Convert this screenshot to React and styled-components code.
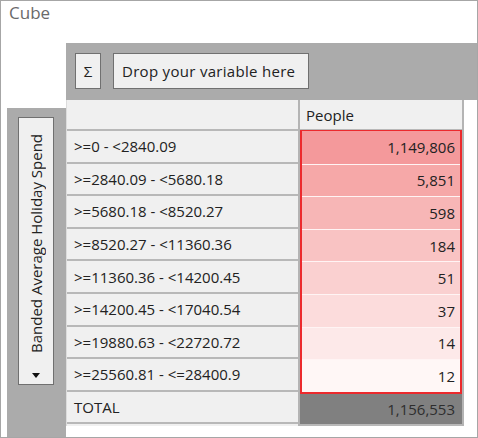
import styled, { createGlobalStyle } from "styled-components";

const GlobalStyle = createGlobalStyle`
  body {
    margin: 0;
    background: #ffffff;
    font-family: "Open Sans", "Noto Sans", "Liberation Sans", sans-serif;
  }
  * {
    box-sizing: border-box;
  }
`;

const rows = [
  { label: ">=0 - <2840.09", value: "1,149,806", bg: "#f4999b" },
  { label: ">=2840.09 - <5680.18", value: "5,851", bg: "#f6a8a8" },
  { label: ">=5680.18 - <8520.27", value: "598", bg: "#f7b6b6" },
  { label: ">=8520.27 - <11360.36", value: "184", bg: "#f9c3c3" },
  { label: ">=11360.36 - <14200.45", value: "51", bg: "#fad0d0" },
  { label: ">=14200.45 - <17040.54", value: "37", bg: "#fcdcdc" },
  { label: ">=19880.63 - <22720.72", value: "14", bg: "#fde9e9" },
  { label: ">=25560.81 - <=28400.9", value: "12", bg: "#fff7f6" },
];

function App() {
  return (
    <>
      <GlobalStyle />
      <Frame>
        <Title>Cube</Title>
        <Body>
          <Corner />
          <Toolbar>
            <ToolButton>Σ</ToolButton>
            <ToolButton $wide>Drop your variable here</ToolButton>
          </Toolbar>
          <LeftArea>
            <RowPanel>
              <VerticalButton>
                <VerticalLabel>Banded Average Holiday Spend</VerticalLabel>
                <svg width="8" height="5" viewBox="0 0 8 5">
                  <path d="M0 0 H8 L4 5 Z" fill="#111" />
                </svg>
              </VerticalButton>
            </RowPanel>
          </LeftArea>
          <TableArea>
            <Table>
              <LabelColumn>
                <HeaderCell />
                {rows.map((r) => (
                  <LabelCell key={r.label}>{r.label}</LabelCell>
                ))}
                <LabelCell $total>TOTAL</LabelCell>
              </LabelColumn>
              <ValueColumn>
                <HeaderCell>People</HeaderCell>
                <Highlight>
                  {rows.map((r) => (
                    <ValueCell key={r.label} $bg={r.bg}>
                      {r.value}
                    </ValueCell>
                  ))}
                </Highlight>
                <TotalCell>1,156,553</TotalCell>
              </ValueColumn>
            </Table>
          </TableArea>
        </Body>
      </Frame>
    </>
  );
}

const Frame = styled.div`
  width: 478px;
  height: 438px;
  border: 1px solid #a6a6a6;
  display: flex;
  flex-direction: column;
  overflow: hidden;
`;

const Title = styled.div`
  height: 42px;
  padding: 0 0 0 8px;
  font-size: 17px;
  line-height: 24px;
  color: #6a6a6a;
`;

const Body = styled.div`
  flex: 1;
  display: grid;
  grid-template-columns: 65px 1fr;
  grid-template-rows: 57px 1fr;
`;

const Corner = styled.div``;

const Toolbar = styled.div`
  background: #ababab;
  margin-right: -1px;
  display: flex;
  align-items: flex-start;
  gap: 12px;
  padding: 10px 0 0 9px;
`;

const ToolButton = styled.div`
  height: 36px;
  width: ${(p) => (p.$wide ? "196px" : "26px")};
  border: 1px solid #707070;
  background: #f0f0f0;
  color: #222222;
  font-size: 15px;
  letter-spacing: ${(p) => (p.$wide ? "0.3px" : "0")};
  display: flex;
  align-items: center;
  justify-content: ${(p) => (p.$wide ? "flex-start" : "center")};
  padding-left: ${(p) => (p.$wide ? "8px" : "0")};
`;

const LeftArea = styled.div`
  padding: 8px 0 0 6px;
  display: flex;
`;

const RowPanel = styled.div`
  flex: 1;
  background: #ababab;
  padding: 9px 0 0 11px;
  margin-bottom: -1px;
`;

const VerticalButton = styled.div`
  width: 36px;
  height: 268px;
  border: 1px solid #707070;
  background: #f0f0f0;
  display: flex;
  flex-direction: column;
  align-items: center;
  padding-bottom: 6px;
`;

const VerticalLabel = styled.div`
  flex: 1;
  writing-mode: vertical-rl;
  transform: rotate(180deg);
  display: flex;
  align-items: center;
  justify-content: center;
  font-size: 15px;
  color: #222222;
  padding-top: 4px;
`;

const TableArea = styled.div`
  background: #ffffff;
`;

const Table = styled.div`
  width: 398px;
  display: flex;
  border-left: 1px solid #dcdcdc;
  font-size: 15px;
  color: #222222;
`;

const LabelColumn = styled.div`
  width: 233px;
  display: flex;
  flex-direction: column;
  border-right: 2px solid #b4b4b4;
  background: #f0f0f0;
`;

const ValueColumn = styled.div`
  width: 164px;
  display: flex;
  flex-direction: column;
  border-right: 2px solid #b4b4b4;
`;

const HeaderCell = styled.div`
  height: 31px;
  background: #f0f0f0;
  border-bottom: 2px solid #b8b8b8;
  padding-left: 6px;
  display: flex;
  align-items: center;
`;

const LabelCell = styled.div`
  height: ${(p) => (p.$total ? "32px" : "32.6px")};
  border-bottom: 2px solid #b8b8b8;
  padding-left: 7px;
  display: flex;
  align-items: center;
  white-space: nowrap;
`;

const Highlight = styled.div`
  border: 2px solid #ec2a2d;
  border-top-width: 1px;
  margin-top: -1px;
  display: flex;
  flex-direction: column;
`;

const ValueCell = styled.div`
  height: 32.6px;
  background: ${(p) => p.$bg};
  border-top: 1px solid #fff4f4;
  display: flex;
  align-items: center;
  justify-content: flex-end;
  padding-right: 5px;
  &:first-child {
    border-top: none;
  }
`;

const TotalCell = styled.div`
  height: 32px;
  background: #808080;
  border-bottom: 2px solid #b8b8b8;
  display: flex;
  align-items: center;
  justify-content: flex-end;
  padding-right: 7px;
  color: #2e2e2e;
`;

export default App;
